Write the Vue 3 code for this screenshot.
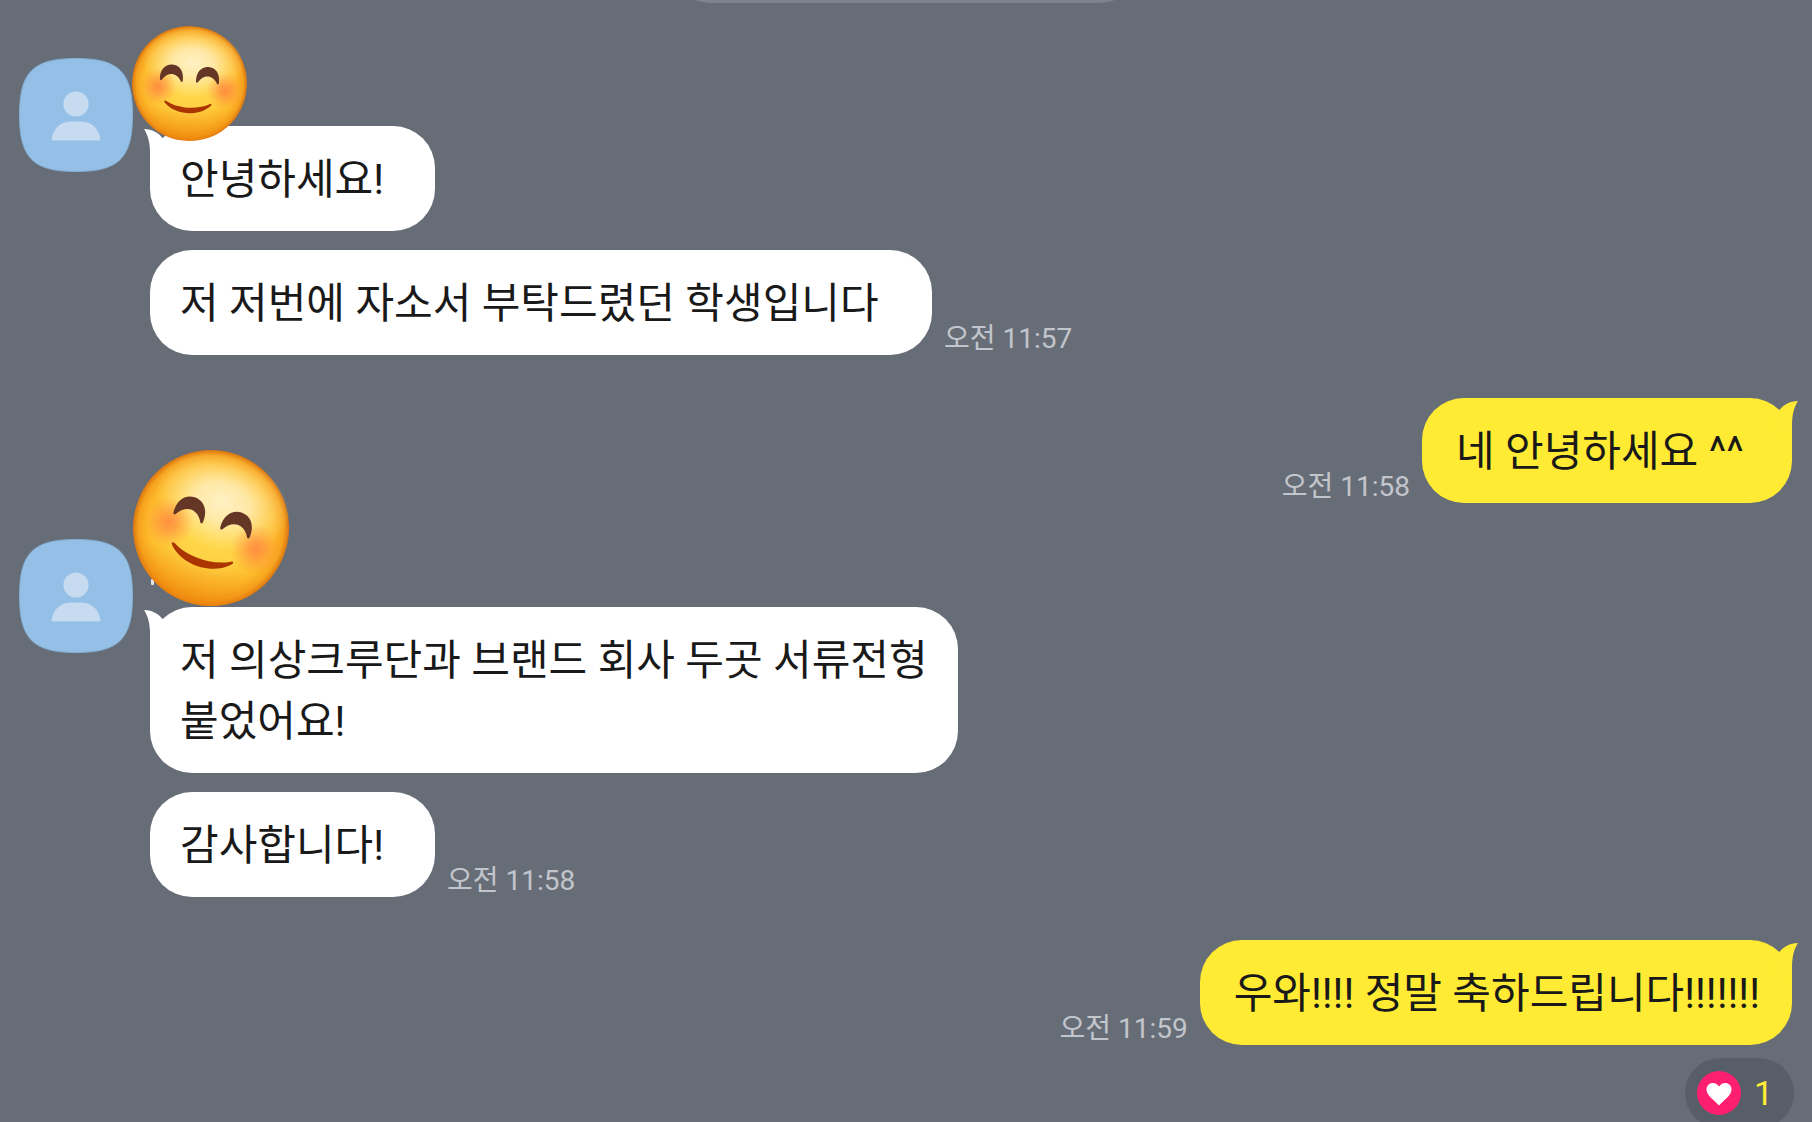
<template>
  <main class="chat">
    <div class="chat__date"></div>

    <section
      v-for="group in groups"
      :key="group.id"
      class="group"
      :class="group.mine ? 'is-mine' : 'is-other'"
    >
      <svg v-if="!group.mine" class="group__avatar" viewBox="0 0 114 114" aria-hidden="true">
        <path d="M57 .5C100 .5 113.5 14 113.5 57S100 113.5 57 113.5.5 100 .5 57 14 .5 57 .5Z" fill="#94bfe6" stroke="#86afd4" />
        <circle cx="57" cy="46" r="12.6" fill="#c6daf0" />
        <path d="M32.500 82.500C33 72 41 63.500 51 63.500H63C73 63.500 81 72 81.500 82.500Z" fill="#c6daf0" />
      </svg>

      <div class="group__body">
        <div v-if="!group.mine" class="group__name" :class="`group__name--${group.smile}`">
          <svg class="smile" :class="`smile--${group.smile}`" viewBox="-100 -100 200 200" aria-hidden="true">
            <defs>
              <radialGradient :id="`face-${group.id}`">
                <stop offset="0" stop-color="#ffdc4e" />
                <stop offset="0.5" stop-color="#ffd042" />
                <stop offset="0.8" stop-color="#fdbb2b" />
                <stop offset="0.93" stop-color="#f6a21d" />
                <stop offset="1" stop-color="#da7510" />
              </radialGradient>
              <radialGradient :id="`shine-${group.id}`">
                <stop offset="0" stop-color="#fff1c4" />
                <stop offset="0.4" stop-color="#ffedb8" stop-opacity="0.85" />
                <stop offset="1" stop-color="#ffe68f" stop-opacity="0" />
              </radialGradient>
              <radialGradient :id="`blush-${group.id}`">
                <stop offset="0" stop-color="#ff8840" stop-opacity="0.9" />
                <stop offset="0.35" stop-color="#ff8c40" stop-opacity="0.65" />
                <stop offset="1" stop-color="#ff9b40" stop-opacity="0" />
              </radialGradient>
              <linearGradient :id="`shade-${group.id}`" x1="0" y1="0" x2="0" y2="1">
                <stop offset="0.7" stop-color="#f28f12" stop-opacity="0" />
                <stop offset="1" stop-color="#ee850c" stop-opacity="0.75" />
              </linearGradient>
            </defs>
            <circle r="100" :fill="`url(#face-${group.id})`" />
            <circle r="100" :fill="`url(#shade-${group.id})`" />
            <ellipse cx="4" cy="-36" rx="88" ry="62" :fill="`url(#shine-${group.id})`" />
            <circle cx="-54" cy="9" r="32" :fill="`url(#blush-${group.id})`" />
            <circle cx="63" cy="8" r="32" :fill="`url(#blush-${group.id})`" />
            <g fill="#653626">
              <path d="M-52 -5C-53 -21 -44 -31 -32 -31S-11 -21 -12 -5C-12 -1 -15 -1 -16 -4C-24 -18 -39 -18 -48 -4C-50 -1 -52 -2 -52 -5Z" />
              <path d="M11 -5C10 -21 19 -31 31 -31S52 -21 51 -5C51 -1 48 -1 47 -4C39 -18 24 -18 15 -4C13 -1 11 -2 11 -5Z" />
            </g>
            <path d="M-42 34C-42 32 -40 32 -38 33C-17 45 17 45 38 33C40 32 42 33 40 36C20 57 -20 57 -40 37Z" fill="#aa3500" />
          </svg>
        </div>

        <div v-for="(message, index) in group.messages" :key="message.text" class="row">
          <p class="bubble" :class="message.size && `bubble--${message.size}`">
            <svg v-if="index === 0" class="bubble__tail" viewBox="0 0 36 42" aria-hidden="true">
              <path d="M0 3C8 3 15 7 18.500 12L30 30 6 42V27C6 17 4 9 0 3Z" fill="currentColor" />
            </svg>
            <span class="bubble__text">{{ message.text }}</span>
          </p>
          <time v-if="message.time" class="row__time">오전 {{ message.time }}</time>
        </div>

        <button v-if="group.hearts" class="reaction" type="button" aria-label="하트">
          <svg class="reaction__heart" viewBox="0 0 44 44" aria-hidden="true">
            <circle cx="22" cy="22" r="22" fill="#ff1f71" />
            <path d="M22 34.500C17 29 9.500 24.500 9.500 18.500C9.500 11.500 18 9.500 22 15.500C26 9.500 34.500 11.500 34.500 18.500C34.500 24.500 27 29 22 34.500Z" fill="#fff" />
          </svg>
          <span>{{ group.hearts }}</span>
        </button>
      </div>
    </section>
  </main>
</template>

<script setup>
const groups = [
  {
    id: 1,
    smile: 'small',
    messages: [
      { text: '안녕하세요!', size: 'short' },
      { text: '저 저번에 자소서 부탁드렸던 학생입니다', size: 'long', time: '11:57' }
    ]
  },
  {
    id: 2,
    mine: true,
    messages: [{ text: '네 안녕하세요 ^^', size: 'medium', time: '11:58' }]
  },
  {
    id: 3,
    smile: 'large',
    messages: [
      { text: '저 의상크루단과 브랜드 회사 두곳 서류전형 붙었어요!' },
      { text: '감사합니다!', size: 'short', time: '11:58' }
    ]
  },
  {
    id: 4,
    mine: true,
    hearts: 1,
    messages: [{ text: '우와!!!! 정말 축하드립니다!!!!!!!', time: '11:59' }]
  }
]
</script>

<style>
body {
  margin: 0;
  background: #676d77;
}
</style>

<style scoped>
.chat {
  box-sizing: border-box;
  height: 100vh;
  padding: 0 20px 0 18px;
  overflow: hidden;
  background: #676d77;
  color: #191919;
  font-family: Roboto, "Noto Sans CJK KR", sans-serif;
}

/* date pill, almost scrolled out of view */
.chat__date {
  width: 480px;
  height: 92px;
  margin: -89px auto 54px;
  border-radius: 46px;
  background: #7c838d;
}

.group {
  display: flex;
}

.group.is-mine {
  justify-content: flex-end;
  margin: 43px 0 35px;
}

.group__avatar {
  flex: none;
  width: 114px;
  height: 114px;
  margin: 1px 17px 0 1px;
}

.group__body {
  display: flex;
  flex-direction: column;
  gap: 19px;
}

.is-mine .group__body {
  align-items: flex-end;
  gap: 13px;
}

.group__name {
  position: relative;
  height: 50px;
}

/* edge of the name peeking out from under the sticker */
.group__name--large::before {
  content: "";
  position: absolute;
  top: 41px;
  left: 1px;
  width: 3px;
  height: 6px;
  border-radius: 1px;
  background: #e6e7ea;
}

.smile {
  position: absolute;
  z-index: 1;
}

.smile--small {
  top: -31px;
  left: -18px;
  width: 115px;
  height: 115px;
  transform: rotate(4deg);
}

.smile--large {
  top: -88px;
  left: -17px;
  width: 156px;
  height: 156px;
  transform: rotate(18deg);
}

.row {
  display: flex;
  align-items: flex-end;
  gap: 12px;
}

.is-mine .row {
  flex-direction: row-reverse;
}

.bubble {
  position: relative;
  box-sizing: border-box;
  max-width: 808px;
  margin: 0;
  padding: 23px 28px 21px 30px;
  border-radius: 42px;
  background: #fff;
  font-size: 42px;
  line-height: 61px;
  word-break: keep-all;
}

.is-mine .bubble {
  padding: 23px 32px 21px 34px;
  background: #ffeb33;
}

.bubble--short {
  min-width: 285px;
}

.bubble--medium {
  min-width: 370px;
}

.bubble--long {
  min-width: 782px;
}

.bubble__tail {
  position: absolute;
  top: 0;
  left: -6px;
  width: 36px;
  height: 42px;
  color: #fff;
}

.is-mine .bubble__tail {
  right: -6px;
  left: auto;
  color: #ffeb33;
  transform: scaleX(-1);
}

.bubble__text {
  position: relative;
}

.row__time {
  color: #c2c5cb;
  font-size: 28px;
  line-height: 32px;
  white-space: nowrap;
}

.reaction {
  display: flex;
  align-items: center;
  gap: 13px;
  height: 70px;
  margin-right: -2px;
  padding: 0 21px 0 12px;
  border: 0;
  border-radius: 35px;
  background: #575e67;
  color: #ffeb33;
  font-family: inherit;
  font-size: 34px;
}

.reaction__heart {
  width: 44px;
  height: 44px;
}
</style>
